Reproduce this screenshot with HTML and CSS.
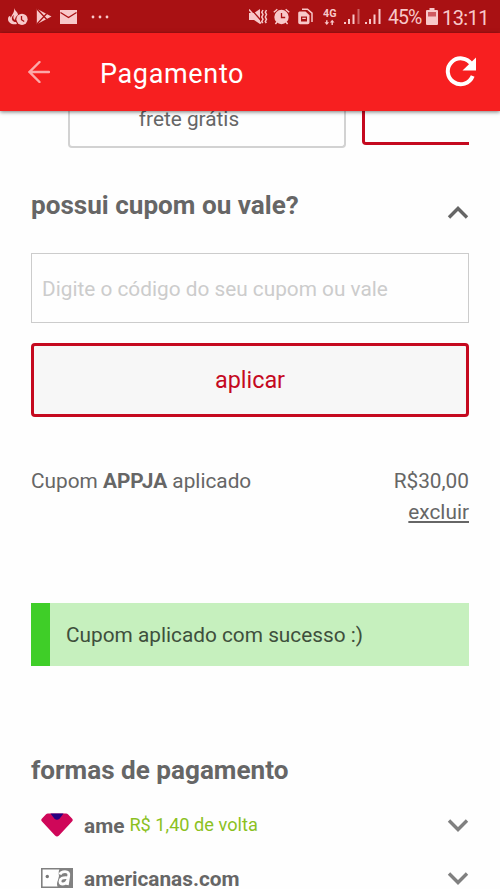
FILE: index.html
```html
<!DOCTYPE html>
<html lang="pt-BR">
<head>
<meta charset="utf-8">
<title>Pagamento</title>
<link rel="stylesheet" href="styles.css">
</head>
<body>
<div class="status">
  <svg class="i-flame" width="20" height="18" viewBox="0 0 20 18"><path fill="currentColor" d="M6 0c1 3 4 4 4 7-2 1-3 3-3 5-2-1-2-3-1-5-2 1-3 4-1 6 1 1 2 1 3 1l1 2C4 17 0 15 0 11c0-2 1-3 2-3l1 2c0-3 4-5 3-10z"/><circle cx="14" cy="11.3" r="5.6" fill="currentColor"/><path class="cut" d="M13.5 8v3.7l2.7 1.8"/></svg>
  <svg class="i-play" width="16" height="17" viewBox="0 0 16 17"><path fill="currentColor" d="M.8.8 15.5 8.5.8 16.2z"/><path class="cut" d="m1 1 9.8 10.5M1 16l9.8-10.5"/></svg>
  <svg class="i-mail" width="17" height="14" viewBox="0 0 17 14"><path fill="currentColor" d="M0 0h17v14H0z"/><path class="cut" d="m.5 2.5 8 5 8-5"/></svg>
  <svg class="i-dots" width="18" height="4" viewBox="0 0 18 4"><g fill="currentColor"><circle cx="2" cy="2" r="1.4"/><circle cx="9" cy="2" r="1.4"/><circle cx="16" cy="2" r="1.4"/></g></svg>
  <svg class="i-mute" width="19" height="17" viewBox="0 0 19 17"><path fill="currentColor" d="M0 5h5l6-4v15l-6-4H0z"/><path class="cut" d="m1 0 11.500 13"/><path class="line" d="m0 1.500 12 14M14 2l-1.200 2.200L14 6.500 12.800 9l1.200 2.300-1.200 2.200 1 1.500M17.500 2l-1.200 2.200 1.200 2.300L16.300 9l1.200 2.300-1.200 2.200 1 1.500"/></svg>
  <svg class="i-alarm" width="17" height="17" viewBox="0 0 17 17"><circle cx="8.500" cy="9" r="7.200" fill="currentColor"/><path class="line" d="m.8 4.200 3.500-3M16.200 4.200l-3.500-3M4 14l-1.600 2M13 14l1.600 2"/><path class="cut" d="M8.500 5v4.500h3.700"/></svg>
  <svg class="i-sim" width="15" height="17" viewBox="0 0 15 17"><path fill="currentColor" fill-rule="evenodd" d="M1.500 3.500h6l4 3.800v7.200q0 1.800-1.800 1.800H2q-1.800 0-1.800-1.800V5q0-1.500 1.300-1.500zM3 8.500v5h6v-5zm1.300 1.300h3.500v1.200H4.300z"/><path class="line" d="M4 1.200h5.500l4.500 4V14"/></svg>
  <svg class="i-4g" width="14" height="19" viewBox="0 0 14 19"><text x="0" y="9.500" textLength="13.500" lengthAdjust="spacingAndGlyphs">4G</text><path fill="currentColor" d="m3.800 18-2.300-2.700h1.600v-2h1.400v2h1.600zM9.200 12.800l-2.300 2.700h1.600V18h1.400v-2.500h1.600z"/></svg>
  <svg class="i-sig" width="16" height="17" viewBox="0 0 16 17"><path fill="currentColor" d="M0 14h2v2H0zM4 11h2v5H4zM8.500 6.500h2V16h-2z"/><path fill="currentColor" opacity=".45" d="M13.500 1h2v15h-2z"/></svg>
  <svg class="i-sig2" width="16" height="17" viewBox="0 0 16 17"><path fill="currentColor" d="M0 14h2v2H0zM4 11h2v5H4zM8.500 6.500h2V16h-2zM13.500 1h2v15h-2z"/></svg>
  <span class="percent">45%</span>
  <svg class="i-bat" width="12" height="17" viewBox="0 0 12 17"><path fill="currentColor" d="M3.500 0h5v2H11q1 0 1 1v13q0 1-1 1H1q-1 0-1-1V3q0-1 1-1h2.500z"/><path fill="#cf5a60" d="M2 4h8v4.500H2z"/></svg>
  <span class="clock">13:11</span>
</div>
<header class="bar">
  <svg class="back" width="22" height="22" viewBox="0 0 22 22"><path d="M11.500 1 1.500 11l10 10M1.500 11H21"/></svg>
  <h1>Pagamento</h1>
  <svg class="reload" width="32" height="32" viewBox="0 0 32 32"><path class="arc" d="M26.500 8.200A12.900 12.900 0 1 0 27.700 20"/><path class="tip" d="M31 1.500V14.500H17.500z"/></svg>
</header>
<main>
  <div class="shipping"><div class="option">frete grátis</div><div class="option selected"></div></div>
  <div class="coupon-head"><h2>possui cupom ou vale?</h2><svg class="chev" width="22" height="13" viewBox="0 0 22 13"><path d="m2 11.500 9-9 9 9"/></svg></div>
  <input class="code" type="text" placeholder="Digite o código do seu cupom ou vale">
  <button class="apply">aplicar</button>
  <div class="applied"><span class="name">Cupom <b>APPJA</b> aplicado</span><div class="value"><span class="price">R$30,00</span><a>excluir</a></div></div>
  <div class="success"><span>Cupom aplicado com sucesso :)</span></div>
  <h2 class="pay-title"><span>formas de pagamento</span></h2>
  <div class="method">
    <svg class="logo" width="32" height="24" viewBox="0 0 32 24"><path fill="#cf0759" d="M7 .5h18q1.300 0 2.200.9l3.800 4q1.500 1.500 0 3L18 22.500q-2 2-4 0L1 8.400q-1.500-1.500 0-3l3.800-4Q5.700.5 7 .5z"/><path fill="#270080" d="M9.500.5h13l-3.800 5q-2.700 2.500-5.400 0z"/></svg>
    <b class="ame">ame</b><span class="cash">R$ 1,40 de volta</span>
    <svg class="chev light" width="22" height="13" viewBox="0 0 22 13"><path d="m2 1.500 9 9 9-9"/></svg>
  </div>
  <div class="method">
    <svg class="logo" width="32" height="20" viewBox="0 0 32 20"><path class="frame" d="M.8.8h30.400v18.400H.8z"/><path fill="#818181" d="M19 0h13v20H17q-2-4 0-8l1-4q-1-5 1-8z"/><circle cx="6.300" cy="8.500" r="1.700" fill="#777"/><path class="a-out" d="M19 6.500q1-2.800 5-2.800 4.500 0 3.700 4.300L26.300 17M27 9.800q-8-.8-8 3.700 0 2.500 2.800 2.500 4 0 5.200-5.500"/></svg>
    <b class="site">americanas.com</b>
    <svg class="chev light" width="22" height="13" viewBox="0 0 22 13"><path d="m2 1.500 9 9 9-9"/></svg>
  </div>
</main>
</body>
</html>
```

FILE: styles.css
```css
* { box-sizing: border-box; }
body { margin: 0; height: 889px; overflow: hidden; background: #fefefe; color: #666; font: 20.8px/24px Roboto, sans-serif; }
svg { display: block; flex: none; }
.status { height: 33px; display: flex; align-items: center; background: #a91113; color: #f8c8c9; padding-left: 8px; white-space: nowrap; }
.cut { fill: none; stroke: #a91113; stroke-width: 1.3; }
.line { fill: none; stroke: currentColor; stroke-width: 1.5; }
.i-play { margin-left: 8px; }
.i-mail { margin-left: 8px; }
.i-dots { margin-left: 14px; }
.i-mute { margin-left: 140px; }
.i-alarm { margin-left: 5px; }
.i-sim { margin-left: 8px; }
.i-4g { margin-left: 10px; }
.i-4g text { font: bold 10px Roboto, sans-serif; fill: currentColor; }
.i-sig { margin-left: 7px; }
.i-sig2 { margin-left: 5px; }
.percent { width: 34px; margin-left: 7px; padding-top: 2px; font-size: 19.5px; letter-spacing: -1px; }
.i-bat { margin-left: 4px; }
.clock { margin-left: 4px; padding-top: 2px; font-size: 20px; letter-spacing: -0.6px; }
.bar { position: relative; height: 78px; display: flex; align-items: center; background: #f71f20; color: #fff; padding: 0 23px 0 28px; box-shadow: 0 1px 4px #0008; }
.back { fill: none; stroke: #fca9a9; stroke-width: 2.4; stroke-linecap: round; }
h1 { margin: 3px auto 0 50px; font-size: 27px; line-height: 32px; font-weight: 400; letter-spacing: 0.65px; }
.arc { fill: none; stroke: #fff; stroke-width: 4; }
.tip { fill: #fff; }
main { padding: 0 31px 0 31px; }
.shipping { display: flex; gap: 16px; height: 37px; margin-left: 37px; }
.option { width: 278px; flex: none; border: 1px solid #d2d2d2; border-width: 0 2px 2px; border-radius: 0 0 4px 4px; padding-right: 36px; text-align: center; line-height: 16px; }
.selected { width: 107px; height: 34px; border: 3px solid #c5091f; border-width: 0 0 3px 3px; border-radius: 0 0 0 4px; }
.coupon-head { display: flex; justify-content: space-between; margin-top: 41px; height: 64px; }
h2 { margin: 0; font-size: 26.1px; line-height: 32px; font-weight: 700; white-space: nowrap; }
.chev { fill: none; stroke: #666; stroke-width: 3.4; }
.coupon-head .chev { margin-top: 17px; }
.light { stroke: #808080; margin-left: auto; }
.code { display: block; width: 438px; height: 70px; border: 1px solid #ccc; padding: 2px 10px 0; background: #fefefe; font: 20.8px Roboto, sans-serif; outline: 0; }
.code::placeholder { color: #ccc; opacity: 1; }
.apply { display: block; width: 438px; height: 74px; margin-top: 20px; padding: 0; border: 3px solid #c5091f; border-radius: 4px; background: #f7f7f7; color: #c5091f; font: 23.4px Roboto, sans-serif; }
.applied { display: flex; justify-content: space-between; height: 135px; margin-top: 52px; }
.value { display: flex; flex-direction: column; align-items: flex-end; gap: 7px; }
.value a { text-decoration: underline; }
.success { height: 63px; margin-top: -1px; border-left: 19px solid #3fce28; background: #c6f0be; color: #3e4f3c; padding: 1px 0 0 16px; line-height: 63px; }
.pay-title { margin-top: 88px; height: 44px; }
.method { display: flex; align-items: center; height: 53px; padding: 1px 0 0 10px; white-space: nowrap; }
.method b { margin-left: 11px; padding-top: 1px; }
.cash { margin-left: 5px; font-size: 18.2px; color: #8bc11f; }
.frame { fill: #fefefe; stroke: #808080; stroke-width: 1.6; }
.a-out { fill: none; stroke: #fefefe; stroke-width: 2.8; }
```
